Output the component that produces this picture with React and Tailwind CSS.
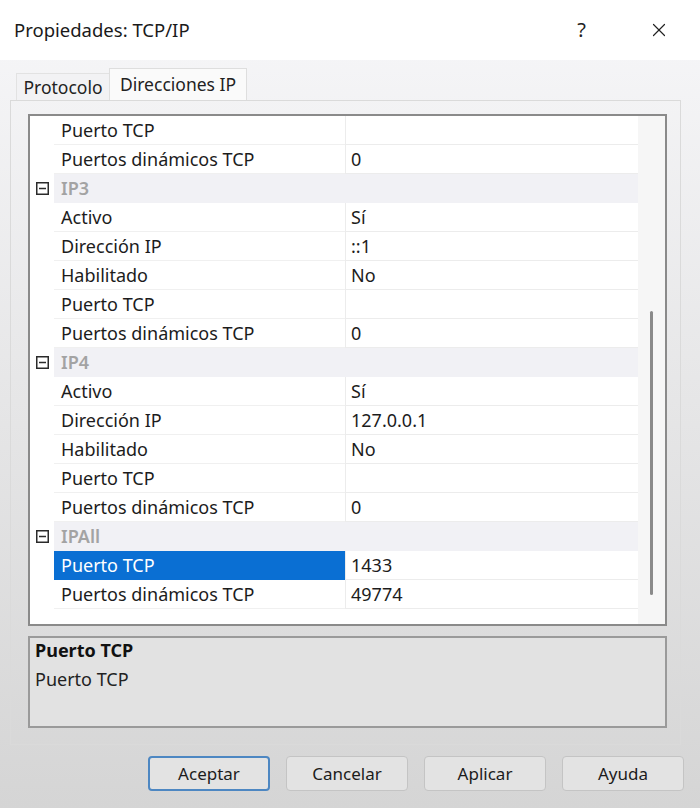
import { X } from "lucide-react";

const rows = [
  { name: "Puerto TCP", value: "" },
  { name: "Puertos dinámicos TCP", value: "0" },
  { group: "IP3" },
  { name: "Activo", value: "Sí" },
  { name: "Dirección IP", value: "::1" },
  { name: "Habilitado", value: "No" },
  { name: "Puerto TCP", value: "" },
  { name: "Puertos dinámicos TCP", value: "0" },
  { group: "IP4" },
  { name: "Activo", value: "Sí" },
  { name: "Dirección IP", value: "127.0.0.1" },
  { name: "Habilitado", value: "No" },
  { name: "Puerto TCP", value: "" },
  { name: "Puertos dinámicos TCP", value: "0" },
  { group: "IPAll" },
  { name: "Puerto TCP", value: "1433", selected: true },
  { name: "Puertos dinámicos TCP", value: "49774" },
];

function MinusBox() {
  return (
    <svg width="13" height="13" viewBox="0 0 13 13">
      <rect x="0.75" y="0.75" width="11.5" height="11.5" fill="none" stroke="#2b2b2b" strokeWidth="1.5" />
      <line x1="3" y1="6.5" x2="10" y2="6.5" stroke="#2b2b2b" strokeWidth="1.5" />
    </svg>
  );
}

function GridRow({ row }) {
  if (row.group) {
    return (
      <div className="flex h-[29px]">
        <div className="w-[24px] flex items-center justify-center pl-[1px]">
          <MinusBox />
        </div>
        <div className="flex-1 bg-[#f1f1f5] flex items-center pl-[7px] text-[#a3a3a3] font-semibold">
          {row.group}
        </div>
      </div>
    );
  }
  return (
    <div className="flex h-[29px]">
      <div className="w-[24px]" />
      <div
        className={
          row.selected
            ? "w-[291px] flex items-center pl-[7px] bg-[#0a6fd3] text-white border-b border-[#0a6fd3]"
            : "w-[291px] flex items-center pl-[7px] text-[#1c1c1c] border-b border-[#f0f0f0]"
        }
      >
        {row.name}
      </div>
      <div className="flex-1 flex items-center pl-[5px] text-[#1c1c1c] border-l border-b border-[#ececec]">
        {row.value}
      </div>
    </div>
  );
}

function DialogButton({ label, primary }) {
  return (
    <button
      className={
        primary
          ? "w-[122px] h-[35px] rounded-[4px] border-2 border-[#4d87c2] bg-[#e3e3e3] text-[17px] text-[#1c1c1c]"
          : "w-[122px] h-[35px] rounded-[4px] border border-[#c4c4c4] bg-[#e3e3e3] text-[17px] text-[#1c1c1c]"
      }
    >
      {label}
    </button>
  );
}

export default function App() {
  return (
    <div className="w-[700px] h-[808px] flex flex-col bg-gradient-to-b from-[#f7f7f9] to-[#d5d5d5] font-['Noto_Sans',sans-serif] text-[18px] overflow-hidden">
      {/* title bar */}
      <div className="h-[60px] bg-white flex items-center pl-[14px] pr-[30px]">
        <span className="text-[18.5px] text-[#1a1a1a] flex-1">Propiedades: TCP/IP</span>
        <span className="text-[20px] text-[#222] mr-[62px]">?</span>
        <X size={22} strokeWidth={1.3} className="text-[#222]" />
      </div>

      {/* tabs */}
      <div className="flex items-end h-[40px] pl-[16px]">
        <div className="h-[27px] w-[94px] flex items-center justify-center text-[17.5px] text-[#222] bg-[#f2f2f4] border border-b-0 border-[#e2e2e2]">
          Protocolo
        </div>
        <div className="h-[32px] w-[138px] flex items-center justify-center text-[17.5px] text-[#222] bg-[#fafafa] border border-b-0 border-[#dedede] -ml-[1px]">
          Direcciones IP
        </div>
      </div>

      {/* tab panel */}
      <div className="mx-[10px] w-[671px] h-[645px] border border-[#dadada] flex flex-col pt-[13px] pl-[17px] pr-[13px]">
        {/* property grid */}
        <div className="h-[512px] border-2 border-[#8a8a8a] bg-white flex">
          <div className="flex-1 flex flex-col">
            {rows.map((row, i) => (
              <GridRow key={i} row={row} />
            ))}
          </div>
          <div className="w-[27px] bg-[#f6f6f6] flex justify-center">
            <div className="mt-[195px] w-[3px] h-[284px] bg-[#8a8a8a] rounded-full" />
          </div>
        </div>

        {/* description */}
        <div className="mt-[10px] h-[92px] border-2 border-[#9a9a9a] bg-[#e2e2e2] px-[5px]">
          <div className="font-bold text-[#111] leading-[24px]">Puerto TCP</div>
          <div className="text-[#222] leading-[24px] mt-[5px]">Puerto TCP</div>
        </div>
      </div>

      {/* buttons */}
      <div className="flex justify-end gap-[16px] pr-[16px] mt-[11px]">
        <DialogButton label="Aceptar" primary />
        <DialogButton label="Cancelar" />
        <DialogButton label="Aplicar" />
        <DialogButton label="Ayuda" />
      </div>
    </div>
  );
}
